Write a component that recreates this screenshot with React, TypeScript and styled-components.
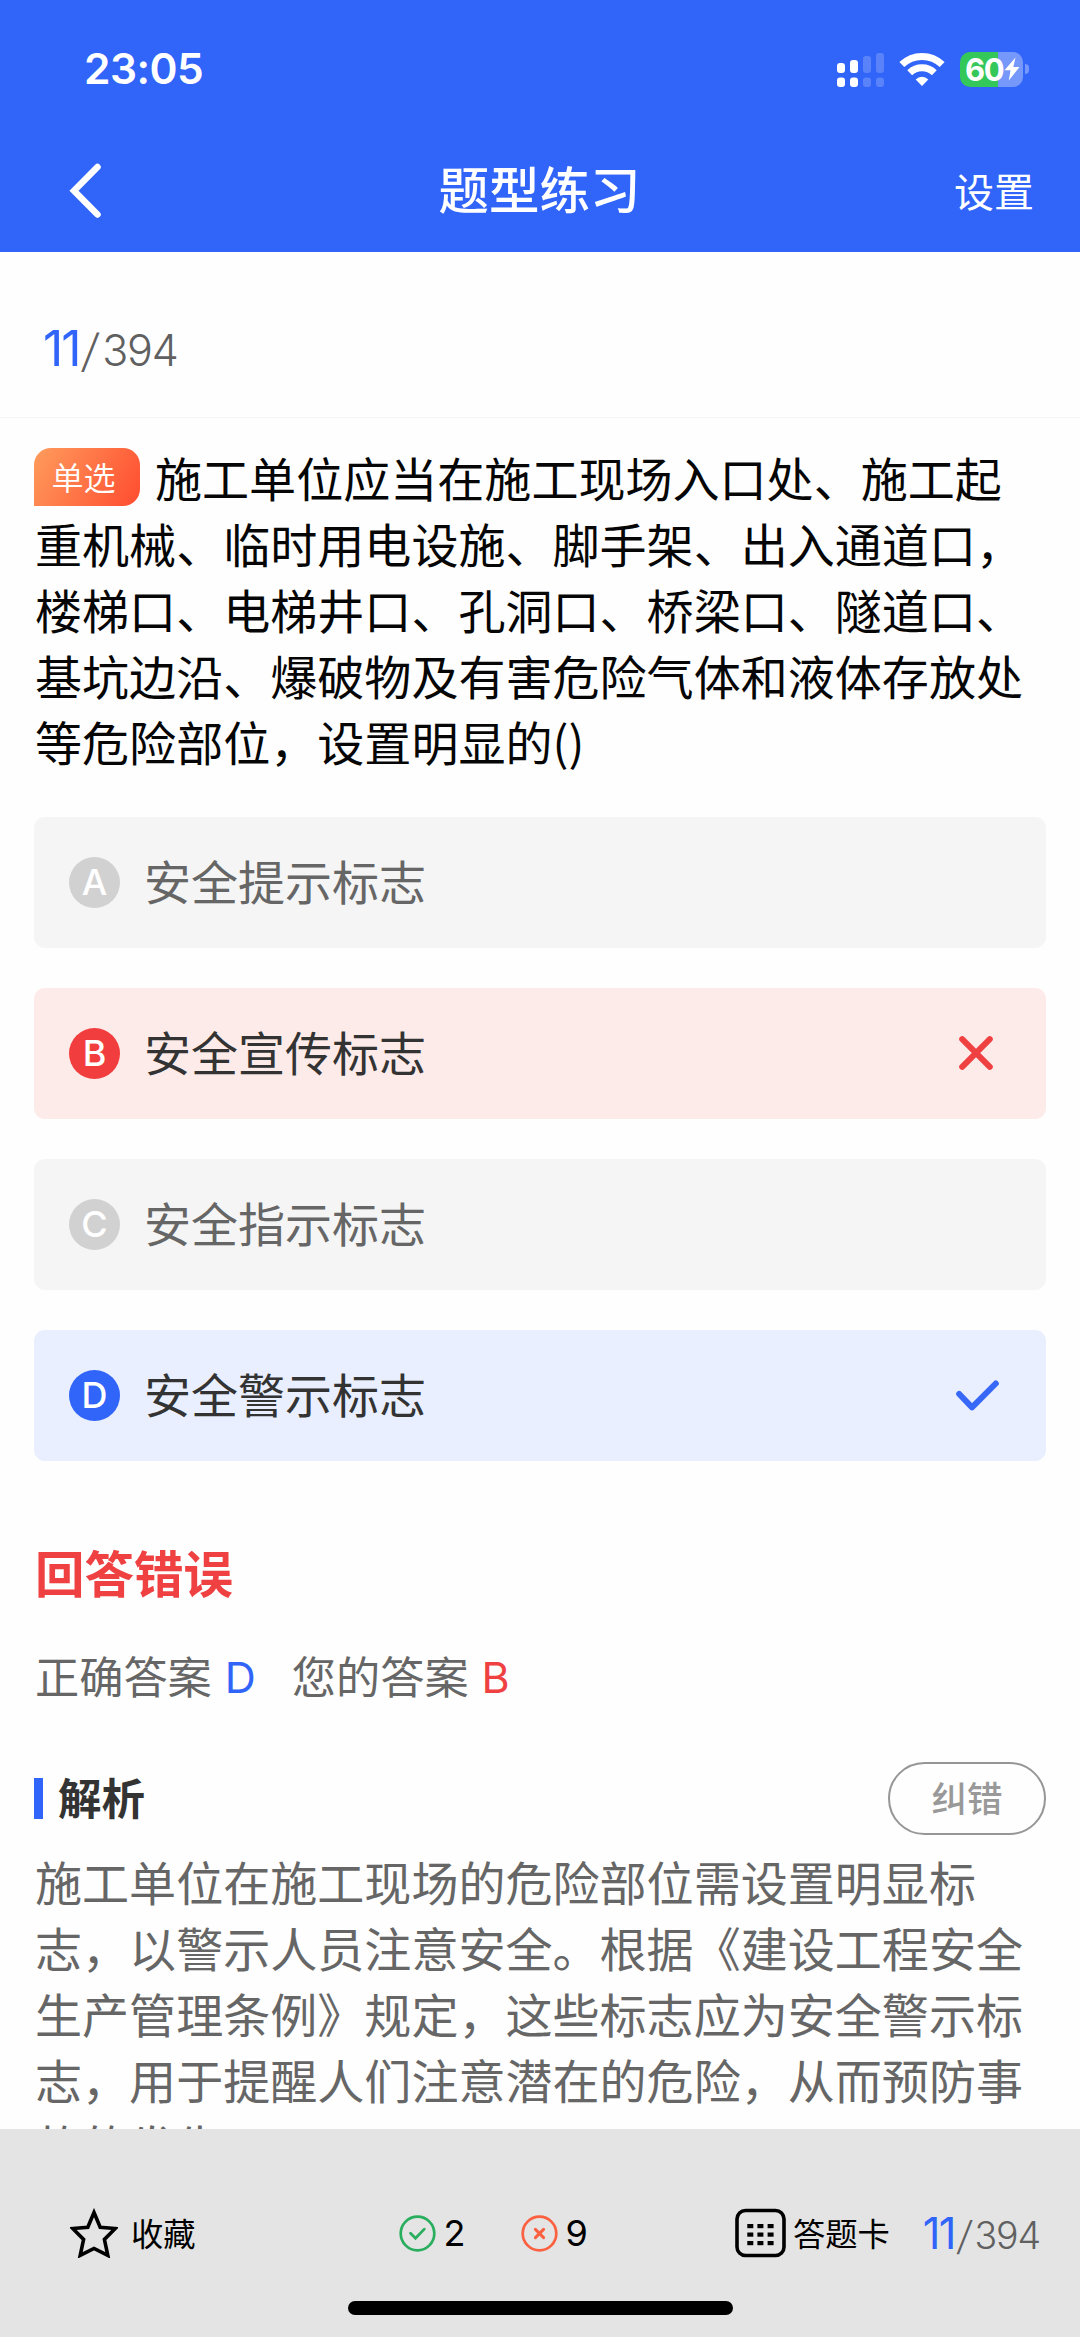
import React from "react";
import styled, { createGlobalStyle } from "styled-components";

const cjk = `"Noto Sans CJK SC", sans-serif`;
const latin = `Inter, "Noto Sans CJK SC", sans-serif`;

const GlobalStyle = createGlobalStyle`
  * { box-sizing: border-box; }
  body {
    margin: 0;
    background: #fff;
    font-family: ${cjk};
    text-spacing-trim: space-all;
  }
  svg { display: block; flex: none; }
`;

const Screen = styled.div`
  width: 1080px;
  height: 2337px;
  display: flex;
  flex-direction: column;
  overflow: hidden;
  background: #fefefe;
`;

const Header = styled.header`
  height: 252px;
  flex: none;
  background: #3164f8;
  color: #fff;
`;

const StatusBar = styled.div`
  height: 138px;
  padding: 0 51px 0 84px;
  display: flex;
  align-items: center;
  justify-content: space-between;
`;

const Clock = styled.span`
  font: 600 42.5px/50px ${latin};
  letter-spacing: -0.5px;
`;

const StatusIcons = styled.div`
  display: flex;
  align-items: center;
  gap: 15px;
`;

const BatteryGroup = styled.div`
  display: flex;
  align-items: center;
  gap: 2px;
`;

const Battery = styled.div`
  width: 63px;
  height: 35px;
  border-radius: 10px;
  padding-left: 5px;
  display: flex;
  align-items: center;
  gap: 1px;
  font: 700 31px/35px ${latin};
  letter-spacing: -1.3px;
  background: linear-gradient(90deg, #34c759 0 38px, #7698fb 38px);
`;

const BatteryTip = styled.i`
  width: 4px;
  height: 10px;
  border-radius: 0 4px 4px 0;
  background: #7698fb;
`;

const NavBar = styled.nav`
  height: 106px;
  padding: 0 46px 0 68px;
  display: grid;
  grid-template-columns: 1fr auto 1fr;
  align-items: center;
`;

const Title = styled.h1`
  margin: 0;
  padding: 0 23px 8px 0;
  font: 500 50.5px/72px ${cjk};
`;

const Settings = styled.span`
  justify-self: end;
  padding-bottom: 3px;
  font-size: 40px;
  line-height: 60px;
`;

const Progress = styled.section`
  height: 166px;
  flex: none;
  padding: 28px 0 0 43px;
  display: flex;
  align-items: center;
  border-bottom: 1px solid #f4f4f4;
`;

const Counter = styled.div<{ $size: number }>`
  display: flex;
  align-items: baseline;
  font: 300 ${(p) => p.$size}px/1.3 ${latin};
  letter-spacing: -0.03em;
  color: #606060;
`;

const Current = styled.span`
  font-size: 1.16em;
  font-weight: 400;
  letter-spacing: -0.04em;
  color: #3164f8;
`;

const Slash = styled.span`
  margin: 0 0.12em 0 0.09em;
  transform: skewX(-8deg) scaleY(1.05);
`;

const Content = styled.main`
  flex: 1;
  min-height: 0;
  overflow: hidden;
  padding: 26px 34px 0;
`;

const Question = styled.p`
  margin: 0;
  padding-left: 1px;
  font-size: 47.05px;
  line-height: 65.9px;
  color: #060606;
  white-space: nowrap;
`;

const Badge = styled.span`
  display: inline-flex;
  align-items: center;
  justify-content: center;
  vertical-align: top;
  width: 106px;
  height: 58px;
  margin: 4px 15px 0 -1px;
  padding: 0 7px 2px 0;
  border-radius: 17px 17px 17px 0;
  background: linear-gradient(120deg, #ff9c5c, #ff4c30);
  color: #fff;
  font-size: 32px;
  font-weight: 350;
  line-height: 56px;
`;

const Options = styled.div`
  display: grid;
  gap: 39.5px;
  margin-top: 43px;
`;

type Tone = "plain" | "wrong" | "right";
const tones = {
  plain: { bg: "#f5f5f5", dot: "#d2d1d2", text: "#666" },
  wrong: { bg: "#fdebe9", dot: "#f23d3f", text: "#333" },
  right: { bg: "#e9effe", dot: "#3164f8", text: "#333" },
};

const Option = styled.div<{ $tone: Tone }>`
  height: 131.5px;
  padding: 0 45px 0 35px;
  display: flex;
  align-items: center;
  border-radius: 11px;
  font-size: 47px;
  line-height: 66px;
  background: ${(p) => tones[p.$tone].bg};
  color: ${(p) => tones[p.$tone].text};
`;

const Letter = styled.b<{ $tone: Tone }>`
  width: 51px;
  height: 51px;
  margin-right: 24px;
  border-radius: 50%;
  background: ${(p) => tones[p.$tone].dot};
  color: #fff;
  text-align: center;
  font: 500 36px/51px ${latin};
`;

const OptionText = styled.span`
  flex: 1;
  padding-bottom: 4px;
`;

const Result = styled.h2`
  margin: 74px 0 0 1px;
  font: 700 49.5px/74px ${cjk};
  color: #ef4142;
`;

const Answers = styled.div`
  display: flex;
  align-items: center;
  margin: 33px 0 0 1px;
  height: 66px;
  font-size: 44.2px;
  line-height: 66px;
  color: #666;
`;

const Answer = styled.span<{ $color: string }>`
  margin: 4px 36px 0 13px;
  font: 400 43px/66px ${latin};
  color: ${(p) => p.$color};
`;

const SectionHead = styled.div`
  display: flex;
  align-items: center;
  margin-top: 54px;
  height: 73px;
`;

const Bar = styled.i`
  width: 9px;
  height: 41px;
  margin-right: 15px;
  background: #3164f8;
`;

const SectionTitle = styled.h3`
  flex: 1;
  margin: 0;
  padding-bottom: 3px;
  font: 700 43.5px/66px ${cjk};
  color: #333;
`;

const Report = styled.button`
  width: 158px;
  height: 73px;
  padding: 0 0 3px;
  border: 2.5px solid #969696;
  border-radius: 37px;
  background: none;
  font: 500 35.5px/60px ${cjk};
  color: #999;
`;

const Explanation = styled.p`
  margin: 13px 0 0 1px;
  font-size: 47.05px;
  line-height: 66px;
  color: #666;
  white-space: nowrap;
`;

const Footer = styled.footer`
  flex: none;
  height: 208px;
  padding: 67px 40px 22px 70px;
  display: flex;
  flex-direction: column;
  justify-content: space-between;
  background: #e4e4e4;
  color: #000;
`;

const Tools = styled.div`
  display: flex;
  align-items: center;
  height: 74px;
`;

const Tool = styled.div<{ $before?: number; $gap: number }>`
  display: flex;
  align-items: center;
  gap: ${(p) => p.$gap}px;
  margin-left: ${(p) => p.$before ?? 0}px;
  font-size: 32.3px;
  line-height: 50px;
`;

const ToolLabel = styled.span`
  padding-bottom: 3px;
`;

const Tally = styled.span`
  width: 22px;
  font: 400 36px/50px ${latin};
  letter-spacing: -1px;
`;

const Spacer = styled.div`
  flex: 1;
`;

const HomeBar = styled.div`
  align-self: center;
  width: 385px;
  height: 14px;
  margin-right: 30px;
  border-radius: 7px;
  background: #000;
`;

const Signal = () => (
  <svg width="47" height="35" viewBox="0 0 47 35" fill="#fff">
    {[11, 8, 4, 1].map((y, i) => (
      <g key={y} opacity={i < 2 ? 1 : 0.2}>
        <rect x={i * 13} y={y} width="8" height={21 - y} rx="3" />
        <rect x={i * 13} y="25.5" width="8" height="9.5" rx="3" />
      </g>
    ))}
  </svg>
);

const Wifi = () => (
  <svg width="46" height="35" viewBox="0 0 46 35" fill="none" stroke="#fff" strokeWidth="7">
    <path d="M2.8 12.6a29 29 0 0 1 40.4 0" />
    <path d="M10.7 20.8a17.8 17.8 0 0 1 24.6 0" />
    <path d="M23 34l-6.3-6.6a9 9 0 0 1 12.6 0z" fill="#fff" stroke="none" />
  </svg>
);

const Bolt = () => (
  <svg width="16" height="24" viewBox="0 0 16 24" fill="#fff">
    <path d="M11.5 0.5L0.5 13.2h6L4.8 23.5 15.5 10H9.3z" />
  </svg>
);

const Back = () => (
  <svg width="34" height="56" viewBox="0 0 34 56" fill="none" stroke="#fff" strokeWidth="6.5" strokeLinecap="round">
    <path d="M29.5 4L6 27.7 29.5 51.5" />
  </svg>
);

const Cross = () => (
  <svg width="50" height="50" viewBox="0 0 50 50" fill="none" stroke="#ef4142" strokeWidth="6" strokeLinecap="round">
    <path d="M11.2 11.2L38.8 38.8M38.8 11.2L11.2 38.8" />
  </svg>
);

const Tick = () => (
  <svg width="50" height="50" viewBox="0 0 50 50" fill="none" stroke="#3768f7" strokeWidth="6" strokeLinecap="round" strokeLinejoin="round">
    <path d="M8.2 24L21 37.3 44.8 13.5" />
  </svg>
);

const Star = () => (
  <svg width="48" height="50" viewBox="0 0 48 50" fill="none" stroke="#000" strokeWidth="3.6">
    <path d="M24 4.5L30.2 19.2 45.3 20.5 34.4 31.4 37.8 47.4 24 40.4 10.2 47.4 13.6 31.4 2.7 20.5 17.8 19.2z" />
  </svg>
);

const Correct = () => (
  <svg width="37" height="37" viewBox="0 0 37 37" fill="none" stroke="#28ae5d" strokeWidth="2.7" strokeLinecap="round">
    <circle cx="18.5" cy="18.5" r="16.8" />
    <path d="M11.5 18.3l5 5 8.8-9.2" />
  </svg>
);

const Incorrect = () => (
  <svg width="37" height="37" viewBox="0 0 37 37" fill="none" stroke="#fb6140" strokeWidth="2.7" strokeLinecap="round">
    <circle cx="18.5" cy="18.5" r="16.8" />
    <path d="M14.4 14.4l8.2 8.2M22.6 14.4l-8.2 8.2" strokeWidth="3" />
  </svg>
);

const Card = () => (
  <svg width="51" height="50" viewBox="0 0 51 50">
    <rect x="2" y="2.5" width="47" height="45" rx="8.5" fill="none" stroke="#000" strokeWidth="3.6" />
    {[16, 24.5, 33].map((y) => [12.3, 22.4, 32.6].map((x) => <rect key={`${x}-${y}`} x={x} y={y} width="6" height="4.2" />))}
  </svg>
);

const options: { letter: string; text: string; tone: Tone }[] = [
  { letter: "A", text: "安全提示标志", tone: "plain" },
  { letter: "B", text: "安全宣传标志", tone: "wrong" },
  { letter: "C", text: "安全指示标志", tone: "plain" },
  { letter: "D", text: "安全警示标志", tone: "right" },
];

const Position = ({ size }: { size: number }) => (
  <Counter $size={size}>
    <Current>11</Current>
    <Slash>/</Slash>394
  </Counter>
);

export default function App() {
  return (
    <Screen>
      <GlobalStyle />
      <Header>
        <StatusBar>
          <Clock>23:05</Clock>
          <StatusIcons>
            <Signal />
            <Wifi />
            <BatteryGroup>
              <Battery>
                <span>60</span>
                <Bolt />
              </Battery>
              <BatteryTip />
            </BatteryGroup>
          </StatusIcons>
        </StatusBar>
        <NavBar>
          <Back />
          <Title>题型练习</Title>
          <Settings>设置</Settings>
        </NavBar>
      </Header>
      <Progress>
        <Position size={43} />
      </Progress>
      <Content>
        <Question>
          <Badge>单选</Badge>
          施工单位应当在施工现场入口处、施工起
          <br />
          重机械、临时用电设施、脚手架、出入通道口，
          <br />
          楼梯口、电梯井口、孔洞口、桥梁口、隧道口、
          <br />
          基坑边沿、爆破物及有害危险气体和液体存放处
          <br />
          等危险部位，设置明显的()
        </Question>
        <Options>
          {options.map((o) => (
            <Option key={o.letter} $tone={o.tone}>
              <Letter $tone={o.tone}>{o.letter}</Letter>
              <OptionText>{o.text}</OptionText>
              {o.tone === "wrong" && <Cross />}
              {o.tone === "right" && <Tick />}
            </Option>
          ))}
        </Options>
        <Result>回答错误</Result>
        <Answers>
          正确答案<Answer $color="#3164f8">D</Answer>
          您的答案<Answer $color="#ef4142">B</Answer>
        </Answers>
        <SectionHead>
          <Bar />
          <SectionTitle>解析</SectionTitle>
          <Report>纠错</Report>
        </SectionHead>
        <Explanation>
          施工单位在施工现场的危险部位需设置明显标
          <br />
          志，以警示人员注意安全。根据《建设工程安全
          <br />
          生产管理条例》规定，这些标志应为安全警示标
          <br />
          志，用于提醒人们注意潜在的危险，从而预防事
          <br />
          故的发生。
        </Explanation>
      </Content>
      <Footer>
        <Tools>
          <Tool $gap={13}>
            <Star />
            <ToolLabel>收藏</ToolLabel>
          </Tool>
          <Tool $before={203} $gap={8}>
            <Correct />
            <Tally>2</Tally>
          </Tool>
          <Tool $before={55} $gap={8}>
            <Incorrect />
            <Tally>9</Tally>
          </Tool>
          <Spacer />
          <Tool $gap={7}>
            <Card />
            <ToolLabel>答题卡</ToolLabel>
          </Tool>
          <Tool $before={33} $gap={0}>
            <Position size={37.5} />
          </Tool>
        </Tools>
        <HomeBar />
      </Footer>
    </Screen>
  );
}
